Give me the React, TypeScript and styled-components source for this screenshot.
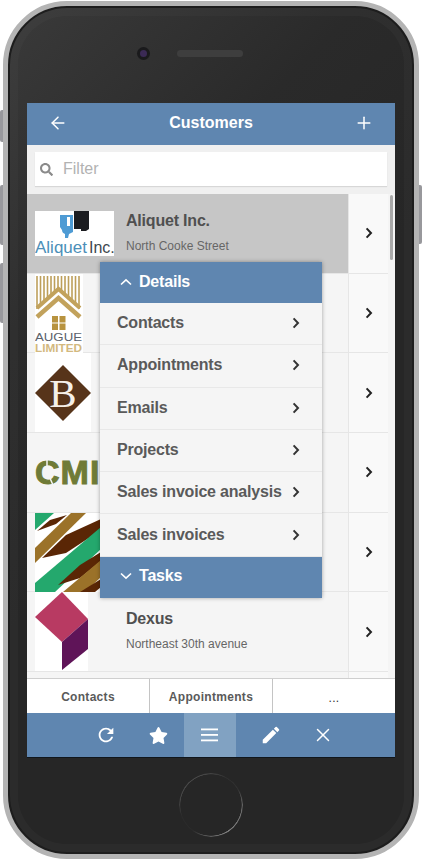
import React from 'react';
import styled, { createGlobalStyle } from 'styled-components';
import { ArrowLeft, Plus, X } from 'lucide-react';
import { FaSearch, FaStar } from 'react-icons/fa';
import { MdEdit, MdRefresh } from 'react-icons/md';

const Global = createGlobalStyle`
  html, body {
    margin: 0;
    padding: 0;
    background: #fff;
    overflow: hidden;
  }
  body {
    font-family: 'Liberation Sans', Arial, sans-serif;
  }
`;

const BLUE = '#5f86b0';

const Stage = styled.div`
  position: relative;
  width: 422px;
  height: 859px;
  background: #fff;
  overflow: hidden;
  padding-top: 1px;
  box-sizing: border-box;
`;

const SideKey = styled.div<{ $top: number; $height: number; $right?: boolean }>`
  position: absolute;
  top: ${(p) => p.$top}px;
  height: ${(p) => p.$height}px;
  width: 4px;
  background: #98989c;
  ${(p) => (p.$right ? 'right: 0; border-radius: 0 2px 2px 0;' : 'left: 0; border-radius: 2px 0 0 2px;')}
`;

const Phone = styled.div`
  position: relative;
  box-sizing: border-box;
  width: 416px;
  height: 858px;
  margin-left: 3px;
  border: 5px solid #b4b4b4;
  border-radius: 64px;
  background: linear-gradient(135deg, #3a3a3a 0%, #2a2a2a 28%, #262626 50%);
  box-shadow: inset 0 0 0 2px #1d1d1d, inset 0 0 0 10px rgba(255, 255, 255, 0.025);
  display: flex;
  flex-direction: column;
  align-items: center;
`;

const TopBezel = styled.div`
  height: 97px;
  width: 100%;
  display: flex;
  align-items: center;
  gap: 30px;
  padding: 0 0 3px 132px;
  box-sizing: border-box;
`;

const Camera = styled.div`
  width: 7px;
  height: 7px;
  border-radius: 50%;
  background: #3b2a55;
  box-shadow: 0 0 0 3px #1a1a1c;
`;

const Speaker = styled.div`
  width: 66px;
  height: 7px;
  border-radius: 4px;
  background-color: #3e3e3e;
  background-image: radial-gradient(#666 0.6px, transparent 0.7px);
  background-size: 2px 2px;
`;

const Screen = styled.div`
  width: 368px;
  height: 655px;
  background: #f5f5f5;
  display: flex;
  flex-direction: column;
  position: relative;
  overflow: hidden;
`;

const BottomBezel = styled.div`
  flex: 1;
  width: 100%;
  display: flex;
  align-items: center;
  justify-content: center;
  padding-bottom: 2px;
  box-sizing: border-box;
`;

const HomeRing = styled.div`
  width: 64px;
  height: 64px;
  border-radius: 50%;
  background: conic-gradient(#444 0deg, #2e2e2e 30deg, #303030 60deg, #666 90deg, #808080 150deg, #555 190deg, #2a2a2a 215deg, #2a2a2a 250deg, #444 275deg, #484848 330deg, #444 360deg);
  -webkit-mask: radial-gradient(circle, transparent 30.4px, #000 30.9px);
  mask: radial-gradient(circle, transparent 30.4px, #000 30.9px);
`;

const Header = styled.header`
  height: 42px;
  box-sizing: border-box;
  flex: none;
  background: ${BLUE};
  color: #fff;
  display: flex;
  align-items: center;
  justify-content: space-between;
  padding: 0 21px 2px;
`;

const Title = styled.h1`
  margin: 0;
  font-size: 16px;
  font-weight: 700;
`;

const FilterBar = styled.div`
  flex: none;
  height: 49px;
  background: #f0f0f0;
  padding: 7px 8px 8px;
  box-sizing: border-box;
`;

const FilterBox = styled.div`
  height: 34px;
  background: #fff;
  box-shadow: 0 1px 1px rgba(0, 0, 0, 0.1);
  display: flex;
  align-items: center;
  gap: 10px;
  padding-left: 5px;
  color: #8a8a8a;
`;

const FilterInput = styled.input`
  border: 0;
  outline: 0;
  padding: 0;
  flex: 1;
  min-width: 0;
  background: transparent;
  font: 16px 'Liberation Sans', Arial, sans-serif;
  &::placeholder {
    color: #b2b2b2;
    opacity: 1;
  }
`;

const List = styled.div`
  flex: 1;
  min-height: 0;
  overflow: hidden;
  position: relative;
  padding-right: 7px;
`;

const Row = styled.div`
  height: 79.7px;
  display: flex;
  box-sizing: border-box;
  border-bottom: 1px solid #e6e6e6;
`;

const RowMain = styled.div<{ $selected?: boolean }>`
  width: 321px;
  flex: none;
  display: flex;
  align-items: center;
  background: ${(p) => (p.$selected ? '#c6c6c6' : '#f5f5f5')};
  padding-left: 8px;
  box-sizing: border-box;
`;

const LogoSlot = styled.div`
  width: 91px;
  flex: none;
  display: flex;
  align-items: center;
`;

const RowText = styled.div`
  display: flex;
  flex-direction: column;
  gap: 9px;
  padding-bottom: 2px;
`;

const RowName = styled.div`
  font-size: 16px;
  font-weight: 700;
  letter-spacing: -0.2px;
  color: #505050;
`;

const RowStreet = styled.div`
  font-size: 12px;
  color: #666;
`;

const RowGo = styled.div`
  flex: 1;
  background: #f9f9f9;
  border-left: 1px solid #e6e6e6;
  display: flex;
  align-items: center;
  justify-content: center;
`;

const ScrollThumb = styled.div`
  position: absolute;
  right: 2px;
  top: 1px;
  width: 3px;
  height: 65px;
  background: #a9a9a9;
  border-radius: 2px;
`;

const Menu = styled.nav`
  position: absolute;
  left: 73px;
  top: 68px;
  width: 222px;
  background: #f5f5f5;
  box-shadow: 0 0 4px rgba(0, 0, 0, 0.35);
  z-index: 2;
`;

const MenuHead = styled.div`
  height: 41px;
  box-sizing: border-box;
  background: ${BLUE};
  color: #fff;
  font-size: 16px;
  font-weight: 700;
  letter-spacing: -0.2px;
  display: flex;
  align-items: center;
  gap: 7px;
  padding: 0 0 2px 20px;
`;

const MenuItem = styled.div`
  height: 42.3px;
  box-sizing: border-box;
  border-bottom: 1px solid #e8e8e8;
  display: flex;
  align-items: center;
  justify-content: space-between;
  padding: 0 22px 1px 17px;
  font-size: 16px;
  font-weight: 700;
  letter-spacing: -0.2px;
  color: #5a5a5a;
  &:last-of-type {
    border-bottom: 0;
  }
`;

const Tabs = styled.div`
  flex: none;
  height: 35px;
  background: #fff;
  border-top: 1px solid #cfcfcf;
  box-sizing: border-box;
  display: flex;
`;

const Tab = styled.div<{ $plain?: boolean }>`
  flex: 1;
  display: flex;
  align-items: center;
  justify-content: center;
  padding-top: ${(p) => (p.$plain ? '3px' : '1px')};
  font-size: 12px;
  font-weight: ${(p) => (p.$plain ? 400 : 700)};
  color: ${(p) => (p.$plain ? '#333' : '#5a5a5a')};
  letter-spacing: 0.3px;
  border-right: 1px solid #c4c4c4;
  &:last-child {
    border-right: 0;
  }
`;

const Toolbar = styled.div`
  flex: none;
  height: 45px;
  background: ${BLUE};
  border-bottom: 1px solid #10161c;
  box-sizing: border-box;
  display: flex;
  padding-left: 53px;
  color: #fff;
`;

const ToolButton = styled.div<{ $active?: boolean; $gap?: boolean }>`
  width: 52px;
  display: flex;
  align-items: center;
  justify-content: center;
  background: ${(p) => (p.$active ? '#81a2c2' : 'transparent')};
  margin-left: ${(p) => (p.$gap ? '9px' : '0')};
`;

const Chevron: React.FC<{ color?: string }> = ({ color = '#222' }) => (
  <svg width="8" height="12" viewBox="0 0 8 12" fill="none">
    <path d="M1.6 1.4 6 6l-4.4 4.600" stroke={color} strokeWidth="2" />
  </svg>
);

const MenuCaret: React.FC<{ up?: boolean }> = ({ up }) => (
  <svg width="12" height="8" viewBox="0 0 12 8" fill="none">
    <path d={up ? 'M1 6.500 6 1.800l5 4.700' : 'M1 1.500 6 6.200l5-4.700'} stroke="#fff" strokeWidth="1.6" />
  </svg>
);

const MenuLines: React.FC = () => (
  <svg width="18" height="14" viewBox="0 0 18 14" fill="#fff">
    <rect y="0.5" width="17" height="1.8" />
    <rect y="6" width="17" height="1.8" />
    <rect y="11.5" width="17" height="1.8" />
  </svg>
);

const AliquetLogo: React.FC = () => (
  <svg width="79" height="45" viewBox="0 0 79 45">
    <rect width="79" height="45" fill="#fff" />
    <path d="M25 4h13v17l-4 2-1 4h-3v-4c-2-1-3-2-3-4l-2-3z" fill="#4e9bd4" />
    <rect x="32" y="6" width="3" height="9" fill="#fff" />
    <path d="M39 0h15v18l-3 2h-5v-2h-7z" fill="#1b1c20" />
    <text x="0" y="42" fontFamily="'Liberation Sans', sans-serif" fontSize="17" fill="#4c8fb8">Aliquet</text>
    <text x="54" y="42" fontFamily="'Liberation Sans', sans-serif" fontSize="16" fill="#40484f">Inc.</text>
  </svg>
);

const AugueLogo: React.FC = () => (
  <svg width="48" height="79" viewBox="0 0 48 79">
    <rect width="48" height="79" fill="#fff" />
    <g stroke="#bd9f5a" strokeWidth="1.6">
      {[2, 5.5, 9, 12.5, 16, 19.5, 23, 26.5, 30, 33.5, 37, 40.5, 44].map((x) => (
        <line key={x} x1={x} y1="2" x2={x} y2={16 + Math.abs(x - 23) * 0.9} />
      ))}
    </g>
    <path d="M2 34 23.500 15 45 34" fill="none" stroke="#c2a25c" strokeWidth="4" />
    <path d="M2 43 23.500 24 45 43" fill="none" stroke="#c2a25c" strokeWidth="4.500" />
    <g fill="#b8933f">
      <rect x="17" y="42" width="6" height="6.500" />
      <rect x="24.500" y="42" width="6" height="6.500" />
      <rect x="17" y="49.500" width="6" height="6.500" />
      <rect x="24.500" y="49.500" width="6" height="6.500" />
    </g>
    <text x="0" y="67" fontFamily="'Liberation Sans', sans-serif" fontSize="11.500" fill="#5b626c" textLength="47" lengthAdjust="spacingAndGlyphs">AUGUE</text>
    <text x="0" y="78" fontFamily="'Liberation Sans', sans-serif" fontSize="11" fontWeight="700" fill="#d3b97f" textLength="47" lengthAdjust="spacingAndGlyphs">LIMITED</text>
  </svg>
);

const BrownLogo: React.FC = () => (
  <svg width="56" height="79" viewBox="0 0 56 79">
    <rect width="56" height="79" fill="#fff" />
    <path d="M28 12 56 40 28 68 0 40z" fill="#57341a" />
    <text x="28" y="54" textAnchor="middle" fontFamily="'Liberation Serif', serif" fontSize="41" fill="#f5efe8">B</text>
  </svg>
);

const CmiLogo: React.FC = () => (
  <svg width="91" height="30" viewBox="0 0 91 30">
    <text x="0" y="27" fontFamily="'Liberation Sans', sans-serif" fontWeight="700" fontSize="34" fill="#6f7b37" stroke="#6f7b37" strokeWidth="1" letterSpacing="1">CMI</text>
    <path d="M12 1v9M14 19l4 9" stroke="#f5f5f5" strokeWidth="1.500" />
  </svg>
);

const StripesLogo: React.FC = () => (
  <svg width="79" height="79" viewBox="0 0 79 79">
    <rect width="79" height="79" fill="#fff" />
    <path d="M0 0h19L0 17z" fill="#24a86d" />
    <path d="M2 18 15 7 32 2 21 11z" fill="#5a2605" />
    <path d="M0 35 36 0h15L0 50z" fill="#9b7229" />
    <path d="M7 45 31 22 66 6v11L31 40z" fill="#5a2605" />
    <path d="M0 70 66 14v22L20 79H0z" fill="#24a86d" />
    <path d="M23 72 45 52 66 39v9L45 65z" fill="#5a2605" />
    <path d="M28 79 66 47v17L50 79z" fill="#9b7229" />
    <path d="M45 79 66 66v8l-6 5z" fill="#5a2605" />
  </svg>
);

const DexusLogo: React.FC = () => (
  <svg width="53" height="79" viewBox="0 0 53 79">
    <rect width="53" height="79" fill="#fff" />
    <path d="M0 25 27 0 53 27 27 50z" fill="#b83a62" />
    <path d="M27 50 53 27v30L27 78z" fill="#5f1458" />
  </svg>
);

const customers = [
  { name: 'Aliquet Inc.', street: 'North Cooke Street', logo: <AliquetLogo />, selected: true },
  { name: '', street: '', logo: <AugueLogo /> },
  { name: '', street: '', logo: <BrownLogo /> },
  { name: '', street: '', logo: <CmiLogo /> },
  { name: '', street: '', logo: <StripesLogo /> },
  { name: 'Dexus', street: 'Northeast 30th avenue', logo: <DexusLogo /> },
  { name: '', street: '' },
];

const details = ['Contacts', 'Appointments', 'Emails', 'Projects', 'Sales invoice analysis', 'Sales invoices'];

const App: React.FC = () => (
  <Stage>
    <Global />
    <SideKey $top={110} $height={32} />
    <SideKey $top={185} $height={60} />
    <SideKey $top={263} $height={60} />
    <SideKey $top={185} $height={59} $right />
    <Phone>
      <TopBezel>
        <Camera />
        <Speaker />
      </TopBezel>
      <Screen>
        <Header>
          <ArrowLeft size={20} strokeWidth={1.8} />
          <Title>Customers</Title>
          <Plus size={20} strokeWidth={1.8} />
        </Header>
        <FilterBar>
          <FilterBox>
            <FaSearch size={13} />
            <FilterInput placeholder="Filter" />
          </FilterBox>
        </FilterBar>
        <List>
          <ScrollThumb />
          {customers.map((c, i) => (
            <Row key={i}>
              <RowMain $selected={c.selected}>
                <LogoSlot>{c.logo}</LogoSlot>
                {c.name && (
                  <RowText>
                    <RowName>{c.name}</RowName>
                    <RowStreet>{c.street}</RowStreet>
                  </RowText>
                )}
              </RowMain>
              <RowGo>
                <Chevron />
              </RowGo>
            </Row>
          ))}
          <Menu>
            <MenuHead>
              <MenuCaret up />
              Details
            </MenuHead>
            {details.map((d) => (
              <MenuItem key={d}>
                {d}
                <Chevron color="#333" />
              </MenuItem>
            ))}
            <MenuHead>
              <MenuCaret />
              Tasks
            </MenuHead>
          </Menu>
        </List>
        <Tabs>
          <Tab>Contacts</Tab>
          <Tab>Appointments</Tab>
          <Tab $plain>...</Tab>
        </Tabs>
        <Toolbar>
          <ToolButton>
            <MdRefresh size={22} />
          </ToolButton>
          <ToolButton>
            <FaStar size={19} />
          </ToolButton>
          <ToolButton $active>
            <MenuLines />
          </ToolButton>
          <ToolButton $gap>
            <MdEdit size={22} />
          </ToolButton>
          <ToolButton>
            <X size={22} strokeWidth={1.6} />
          </ToolButton>
        </Toolbar>
      </Screen>
      <BottomBezel>
        <HomeRing />
      </BottomBezel>
    </Phone>
  </Stage>
);

export default App;
